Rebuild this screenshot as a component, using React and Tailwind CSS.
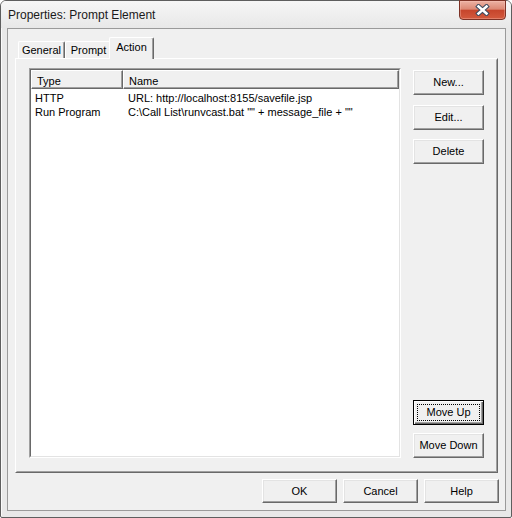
import React from "react";

function Btn({ children, className = "" }) {
  return (
    <div
      className={`flex items-center justify-center border border-t-white border-l-white border-r-[#696969] border-b-[#696969] bg-[#f0f0f0] shadow-[inset_-1px_-1px_0_#a0a0a0,inset_1px_1px_0_#e3e3e3] text-[11px] leading-[13px] text-black ${className}`}
    >
      {children}
    </div>
  );
}

function DefBtn({ children, className = "" }) {
  return (
    <div
      className={`flex border border-black bg-[#f0f0f0] shadow-[inset_1px_1px_0_#fff,inset_-1px_-1px_0_#696969,inset_-2px_-2px_0_#a0a0a0] p-[3px] ${className}`}
    >
      <div className="flex flex-1 items-center justify-center border border-dotted border-black text-[11px] leading-[13px] text-black">
        {children}
      </div>
    </div>
  );
}

function CloseX() {
  return (
    <svg width="15" height="12" viewBox="0 0 15 12">
      <path d="M3.5 2.5 L11.5 9.5 M11.5 2.5 L3.5 9.5" stroke="#3d4a5f" strokeWidth="4.6" strokeLinecap="square" fill="none" />
      <path d="M3.5 2.5 L11.5 9.5 M11.5 2.5 L3.5 9.5" stroke="#ffffff" strokeWidth="2.6" strokeLinecap="square" fill="none" />
    </svg>
  );
}

export default function App() {
  return (
    <div className="w-[512px] h-[518px] font-['Liberation_Sans',Arial,sans-serif] bg-white">
      <div className="w-[512px] h-[518px] flex flex-col border border-[#5e5e5e] rounded-t-[6px] rounded-b-[2px] bg-[#e8e8e8] shadow-[inset_1px_1px_0_#fafafa]">
        {/* Title bar */}
        <div className="h-[27px] flex items-start justify-between bg-gradient-to-b from-[#f6f6f6] to-[#e8e8e8] rounded-t-[5px]">
          <div className="mt-[7px] pl-[7px] text-[12px] leading-[14px] text-[#1a1a1a]">
            Properties: Prompt Element
          </div>
          <div className="-mt-[1px] mr-[5px] w-[47px] h-[20px] flex items-center justify-center rounded-b-[4px] border border-[#7d3226] bg-[linear-gradient(to_bottom,#ecb2a4_0%,#dc8874_45%,#c6452c_52%,#d35a3e_100%)] shadow-[inset_0_0_0_1px_rgba(255,200,190,0.35)]">
            <CloseX />
          </div>
        </div>

        {/* Client area */}
        <div className="flex-1 flex pl-[6px] pr-[5px] pb-[6px]">
          <div className="flex-1 flex flex-col border border-[#9a9a9a] bg-[#f0f0f0] pt-[8px] px-[7px]">
            {/* Tabs */}
            <div className="h-[21px] flex items-end pl-[3px]">
              <div className="w-[47px] h-[17px] flex justify-center pt-[2px] border-t border-l border-r border-t-white border-l-white border-r-[#696969] rounded-t-[2px] shadow-[inset_-1px_0_0_#a0a0a0] text-[11px] leading-[13px] text-black">
                General
              </div>
              <div className="w-[46px] h-[17px] flex justify-center pt-[2px] border-t border-l border-t-white border-l-white rounded-t-[2px] text-[11px] leading-[13px] text-black">
                Prompt
              </div>
              <div className="relative z-10 -ml-[2px] -mb-[1px] w-[45px] h-[22px] flex justify-center pt-[3px] bg-[#f0f0f0] border-t border-l border-r border-t-white border-l-white border-r-[#696969] rounded-t-[2px] shadow-[inset_-1px_0_0_#a0a0a0] text-[11px] leading-[13px] text-black">
                Action
              </div>
            </div>

            {/* Tab panel */}
            <div className="h-[415px] flex border border-t-white border-l-white border-r-[#696969] border-b-[#696969]">
              <div className="flex-1 flex border border-t-[#f0f0f0] border-l-[#f0f0f0] border-r-[#a0a0a0] border-b-[#a0a0a0] pt-[8px] pl-[12px]">
                {/* List box */}
                <div className="w-[372px] h-[390px] flex border border-t-[#a0a0a0] border-l-[#a0a0a0] border-r-white border-b-white">
                  <div className="flex-1 flex flex-col border border-t-[#696969] border-l-[#696969] border-r-[#e3e3e3] border-b-[#e3e3e3] bg-white">
                    <div className="h-[19px] flex text-[11px] leading-[13px] text-black">
                      <div className="w-[92px] pl-[5px] pt-[4px] bg-[#f0f0f0] border border-t-white border-l-white border-r-[#696969] border-b-[#696969] shadow-[inset_-1px_-1px_0_#a0a0a0]">
                        Type
                      </div>
                      <div className="flex-1 pl-[5px] pt-[4px] bg-[#f0f0f0] border border-t-white border-l-white border-r-[#696969] border-b-[#696969] shadow-[inset_-1px_-1px_0_#a0a0a0]">
                        Name
                      </div>
                    </div>
                    <div className="pt-[2px] text-[11px] leading-[14px] text-black">
                      <div className="flex h-[14px]">
                        <div className="w-[92px] pl-[4px]">HTTP</div>
                        <div className="pl-[5px] whitespace-pre">URL: http://localhost:8155/savefile.jsp</div>
                      </div>
                      <div className="flex h-[14px]">
                        <div className="w-[92px] pl-[4px]">Run Program</div>
                        <div className="pl-[5px] whitespace-pre">{'C:\\Call List\\runvcast.bat "" + message_file + ""'}</div>
                      </div>
                    </div>
                  </div>
                </div>

                {/* Right buttons */}
                <div className="ml-[12px] w-[71px] h-[390px] flex flex-col">
                  <Btn className="mt-[2px] h-[25px]">New...</Btn>
                  <Btn className="mt-[10px] h-[25px]">Edit...</Btn>
                  <Btn className="mt-[9px] h-[25px]">Delete</Btn>
                  <div className="flex-1" />
                  <DefBtn className="h-[25px]">Move Up</DefBtn>
                  <Btn className="mt-[8px] h-[25px]">Move Down</Btn>
                </div>
              </div>
            </div>

            {/* Bottom buttons */}
            <div className="mt-[6px] flex justify-end gap-[6px] -mr-[1px]">
              <Btn className="w-[75px] h-[24px]">OK</Btn>
              <Btn className="w-[75px] h-[24px]">Cancel</Btn>
              <Btn className="w-[75px] h-[24px]">Help</Btn>
            </div>
          </div>
        </div>
      </div>
    </div>
  );
}
